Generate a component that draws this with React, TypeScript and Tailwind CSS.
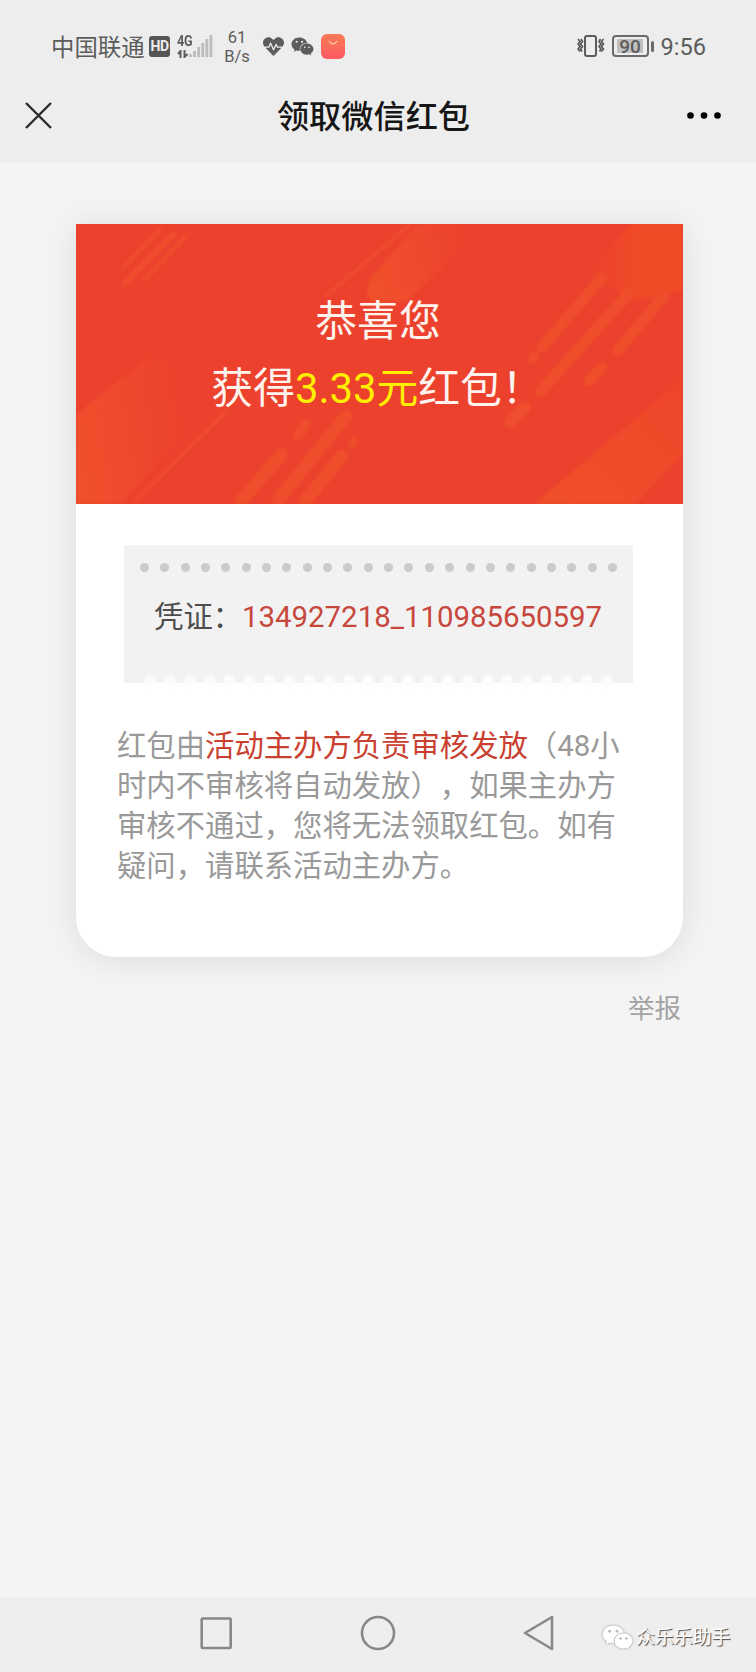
import { FaHeartbeat, FaWeixin } from "react-icons/fa";

const bars = [3, 6, 10, 14, 18, 22];

function StatusBar() {
  return (
    <div className="flex h-[92px] items-center justify-between pl-[51px] pr-[50px] text-[#5c5c5c]">
      <div className="flex items-center">
        <span className="mt-[3px] w-[98px] whitespace-nowrap text-[23.4px] leading-6">中国联通</span>
        <span className="flex h-[21px] w-[21px] items-center justify-center rounded-[3px] bg-[#555]">
          <span className="text-[14px] font-bold leading-[21px] tracking-[-0.5px] text-[#ededed]">HD</span>
        </span>
        <div className="ml-[7px] flex h-[23px] w-[13px] flex-col justify-between">
          <span className="origin-left scale-x-90 text-[14px] font-bold leading-[12px] tracking-tight">4G</span>
          <svg className="h-2 w-3" viewBox="0 0 12 8" fill="none" stroke="currentColor" strokeWidth="2">
            <path d="M3.5 8V1L1 4M7.5 0V7L10.5 4" />
          </svg>
        </div>
        <svg className="ml-[-1px] h-[22px] w-[24px]" viewBox="0 0 24 22" fill="#bdbdbd">
          {bars.map((h, i) => (
            <rect key={h} x={i * 4.1} y={22 - h} width="2.8" height={h} />
          ))}
        </svg>
        <div className="ml-[10px] mt-[2px] w-[28px] text-center text-[16.5px] leading-[19px]">
          <div>61</div>
          <div>B/s</div>
        </div>
        <FaHeartbeat className="ml-3 mt-px h-[21px] w-[21px]" />
        <FaWeixin className="ml-[7px] mt-px h-[23px] w-[23px]" />
        <span className="ml-[7px] mt-px flex h-[25px] w-[24px] justify-center rounded-[6px] bg-linear-to-b from-[#f97a55] to-[#fb5a62]">
          <svg className="mt-[6px] h-[6px] w-[10px]" viewBox="0 0 10 6" fill="none" stroke="#ffd5b8" strokeWidth="1.2">
            <path d="M1 1q4 6 8 0" />
          </svg>
        </span>
      </div>
      <div className="flex items-center">
        <svg className="h-[22px] w-[28px]" viewBox="0 0 28 22" fill="none" stroke="currentColor" strokeWidth="2">
          <rect x="8" y="1" width="11" height="20" rx="2" />
          <path
            d="M1 4l2 2.5-2 2.5 2 2.5-2 2.5 2 2.5M4 4l1.500 2.5-2 2.5 2 2.5-2 2.5 1.500 2.5M26.500 4l-2 2.5 2 2.5-2 2.5 2 2.5-2 2.5M23.500 4l-1.500 2.5 2 2.5-2 2.5 2 2.5-1.500 2.5"
            strokeWidth="1.7"
          />
        </svg>
        <span className="ml-[7px] flex h-[22px] w-[37px] items-center justify-center rounded-[4px] border-2 border-[#6b6b6b]">
          <span className="h-[14px] w-[26px] bg-[#c0c0c0] text-center text-[19px] font-medium leading-[15px]">90</span>
        </span>
        <span className="ml-[2px] h-[11px] w-[3px] rounded-sm bg-[#6b6b6b]" />
        <span className="ml-[7px] mt-[2px] text-[23.6px] leading-6">9:56</span>
      </div>
    </div>
  );
}

function TitleBar() {
  return (
    <div className="flex h-[71px] items-start justify-between pl-[25px] pr-[35px] text-[#161616]">
      <svg className="mt-[10px] h-[27px] w-[27px]" viewBox="0 0 27 27" fill="none" stroke="#2b2b2b" strokeWidth="2.4">
        <path d="M1 1l25 25M26 1L1 26" />
      </svg>
      <h1 className="ml-[8px] mt-px text-[32.2px] font-medium leading-[48px]">领取微信红包</h1>
      <svg className="mt-[20px] h-[7px] w-[34px]" viewBox="0 0 34 7">
        <circle cx="3.5" cy="3.5" r="3.3" />
        <circle cx="17" cy="3.5" r="3.3" />
        <circle cx="30.5" cy="3.5" r="3.3" />
      </svg>
    </div>
  );
}

function Banner() {
  return (
    <div className="relative h-[280px] overflow-hidden bg-[#ec412d]">
      <svg className="absolute inset-0 h-full w-full blur-[1.5px]" viewBox="0 0 607 280" fill="none" strokeLinecap="round">
        <defs>
          <linearGradient id="patch" x1="0" y1="1" x2="1" y2="0">
            <stop offset="0" stopColor="#f0502b" />
            <stop offset="1" stopColor="#ee4529" />
          </linearGradient>
          <linearGradient id="fade" x1="0" y1="0.6" x2="1" y2="0.4">
            <stop offset="0" stopColor="#f0502c" />
            <stop offset="1" stopColor="#ec412d" />
          </linearGradient>
          <linearGradient id="corner" x1="0" y1="0" x2="1" y2="0">
            <stop offset="0" stopColor="#ec412d" />
            <stop offset="0.5" stopColor="#f04a27" />
            <stop offset="1" stopColor="#f04a27" />
          </linearGradient>
        </defs>
        <path d="M-5 195L70 134H114L104 215L40 285H-5z" fill="url(#fade)" />
        <path d="M296 52L346 -5H400L370 40L330 78H296Q286 70 296 52z" fill="url(#fade)" />
        <path d="M452 285L612 150V225L555 285z" fill="url(#patch)" />
        <path d="M512 50L560 -5H612V66L560 76z" fill="url(#corner)" />
        <g stroke="#ef4e2c">
          <path d="M47 44L84 6" strokeWidth="4" />
          <path d="M49 59L98 10" strokeWidth="6" />
          <path d="M68 56L110 12" strokeWidth="4" />
          <path d="M250 72L332 2" strokeWidth="3.5" />
          <path d="M60 276L152 186" strokeWidth="3.5" />
          <path d="M466 123L525 55" strokeWidth="11" />
          <path d="M464 168L552 70" strokeWidth="11" />
          <path d="M542 126L588 72" strokeWidth="11" />
          <path d="M513 157L526 143" strokeWidth="11" />
          <path d="M434 198L449 183" strokeWidth="12" />
          <path d="M457 134L458 133" strokeWidth="11" />
          <path d="M166 276L206 230" strokeWidth="13" />
          <path d="M202 276L270 192" strokeWidth="13" />
          <path d="M230 276L266 232" strokeWidth="13" />
          <path d="M222 211L230 200" strokeWidth="10" />
          <path d="M276 220L278 217" strokeWidth="8" />
        </g>
      </svg>
      <div className="relative pt-[64px] text-center text-[41.8px] leading-[67px] text-[#fff3ee]">
        <p className="-ml-[3px]">恭喜您</p>
        <p className="-ml-[4px] whitespace-nowrap">
          获得<span className="text-[#ffee00]">3.33元</span>红包！
        </p>
      </div>
    </div>
  );
}

function Voucher() {
  return (
    <div className="ml-[48px] mt-[41px] h-[138px] w-[509px] bg-[#f2f2f2]">
      <div className="flex justify-between px-4 pt-[18px]">
        {Array.from({ length: 24 }, (_, i) => (
          <span key={i} className="h-[9px] w-[9px] rounded-full bg-[#cbcbcb]" />
        ))}
      </div>
      <div className="mt-[25px] flex whitespace-nowrap pl-[30px] text-[29.4px] leading-[40px] text-[#4d4d4d]">
        <span className="w-[88px]">凭证：</span>
        <span className="text-[#c8473c]">134927218_110985650597</span>
      </div>
      <div className="mt-[38px] flex justify-between px-5">
        {Array.from({ length: 24 }, (_, i) => (
          <span key={i} className="h-[12px] w-[12px] rounded-full bg-[#fcfcfc] blur-[1px]" />
        ))}
      </div>
    </div>
  );
}

function NavBar() {
  return (
    <div className="flex h-[75px] items-start bg-[#eeeeee] pl-[200px]">
      <svg className="mt-[20px] h-[33px] w-[33px]" viewBox="0 0 33 33" fill="none" stroke="#888" strokeWidth="2.6">
        <rect x="1.7" y="1.5" width="29" height="29.5" rx="1" />
      </svg>
      <svg className="ml-[127px] mt-[18px] h-[36px] w-[36px]" viewBox="0 0 36 36" fill="none" stroke="#888" strokeWidth="2.6">
        <circle cx="18" cy="18" r="16" />
      </svg>
      <svg className="ml-[126px] mt-[17px] h-[38px] w-[33px]" viewBox="0 0 33 38" fill="none" stroke="#888" strokeWidth="2.6" strokeLinejoin="round">
        <path d="M30 3v32L3 19z" />
      </svg>
      <div className="ml-[47px] mt-[21px] flex items-center whitespace-nowrap text-white">
        <FaWeixin className="h-[31px] w-[31px] drop-shadow-[0_0_1px_#888]" />
        <span className="ml-[3px] mt-px text-[18.9px] leading-[38px] [text-shadow:1px_1px_1px_#444]">众乐乐助手</span>
      </div>
    </div>
  );
}

export default function App() {
  return (
    <div className="flex h-[1672px] w-[756px] flex-col overflow-hidden bg-[#f4f4f4] font-[Roboto,'Noto_Sans_CJK_SC',sans-serif]">
      <header className="bg-[#ededed]">
        <StatusBar />
        <TitleBar />
      </header>
      <main className="flex-1 pl-[76px] pt-[61px]">
        <div className="h-[733px] w-[607px] overflow-hidden rounded-b-[40px] bg-white shadow-[0_2px_32px_rgba(60,75,85,0.14)]">
          <Banner />
          <Voucher />
          <p className="ml-[41px] mt-[43px] w-[520px] whitespace-nowrap text-[29.35px] leading-[40px] text-[#999] [text-spacing-trim:space-all]">
            红包由<span className="text-[#c9402f]">活动主办方负责审核发放</span>（48小
            <br />
            时内不审核将自动发放），如果主办方
            <br />
            审核不通过，您将无法领取红包。如有
            <br />
            疑问，请联系活动主办方。
          </p>
        </div>
        <p className="mt-[32px] w-[605px] text-right text-[26.5px] leading-[40px] text-[#a3a3a3]">举报</p>
      </main>
      <NavBar />
    </div>
  );
}
